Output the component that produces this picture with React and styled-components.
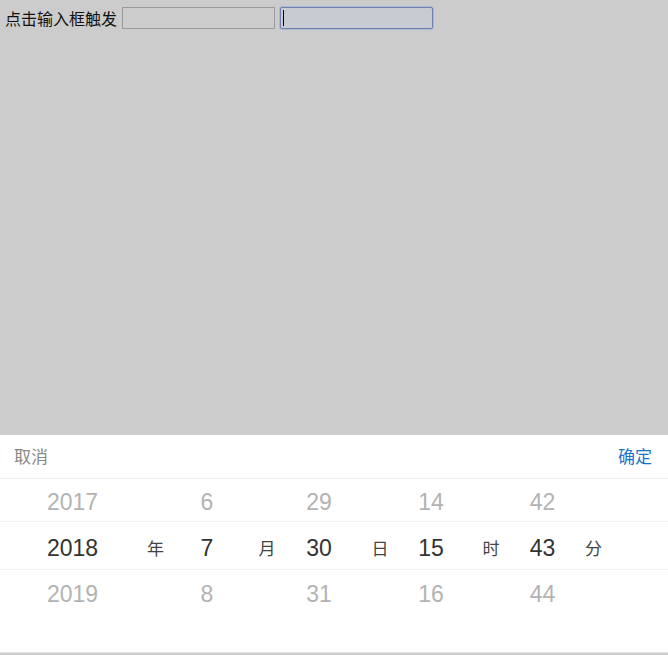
import React from "react";
import styled, { createGlobalStyle } from "styled-components";

const Global = createGlobalStyle`
  html, body { margin: 0; padding: 0; background: #cccccc; }
  body { font-family: "Noto Sans CJK SC", "Liberation Sans", sans-serif; }
  * { box-sizing: border-box; }
`;

const Page = styled.div`
  height: 655px;
  display: flex;
  flex-direction: column;
  justify-content: space-between;
  background: #cccccc;
`;

const TopBar = styled.div`
  display: flex;
  align-items: center;
  padding: 7px 5px 0;
  height: 29px;
`;

const Label = styled.span`
  font-size: 16px;
  line-height: 22px;
  color: #111;
  margin-right: 5px;
`;

const Field = styled.div`
  width: 153px;
  height: 22px;
  margin-right: 5px;
  border: 1px solid ${(p) => (p.$focused ? "#6f80b3" : "#9a9a9a")};
  border-radius: ${(p) => (p.$focused ? "2px" : "0")};
  background: ${(p) => (p.$focused ? "#c9cbd3" : "transparent")};
  box-shadow: ${(p) => (p.$focused ? "0 0 0 1px rgba(140,160,215,0.45)" : "none")};
  display: flex;
  align-items: center;
  padding-left: 2px;
`;

const Caret = styled.span`
  width: 1px;
  height: 16px;
  background: #000;
`;

const Panel = styled.div`
  height: 218px;
  margin-bottom: 2px;
  background: #fff;
  display: flex;
  flex-direction: column;
  border-bottom: 1px solid #e4e4e4;
`;

const Header = styled.div`
  height: 44px;
  flex: none;
  display: flex;
  justify-content: space-between;
  align-items: center;
  padding: 0 16px 2px 14px;
  border-bottom: 1px solid #f0f0f0;
`;

const HeaderButton = styled.span`
  font-size: 17px;
  color: ${(p) => (p.$primary ? "#1a73c9" : "#888")};
`;

const Wheels = styled.div`
  position: relative;
  flex: 1;
  display: grid;
  grid-template-columns: 145px 21px 82px 38px 66px 56px 46px 74px 29px 73px 1fr;
  align-items: start;
`;

const Indicator = styled.div`
  position: absolute;
  left: 0;
  right: 0;
  top: 42px;
  height: 49px;
  border-top: 1px solid #f2f2f2;
  border-bottom: 1px solid #f2f2f2;
  pointer-events: none;
`;

const Wheel = styled.div`
  display: flex;
  flex-direction: column;
  align-items: center;
`;

const Item = styled.div`
  height: 46px;
  line-height: 46px;
  font-family: "Liberation Sans", Arial, sans-serif;
  font-size: 23px;
  color: ${(p) => (p.$active ? "#333" : "#b3b3b3")};
  white-space: nowrap;
`;

const Unit = styled.div`
  margin-top: 46px;
  height: 46px;
  line-height: 46px;
  text-align: center;
  font-size: 17px;
  color: #444;
`;

const columns = [
  { values: ["2017", "2018", "2019"], unit: "年" },
  { values: ["6", "7", "8"], unit: "月" },
  { values: ["29", "30", "31"], unit: "日" },
  { values: ["14", "15", "16"], unit: "时" },
  { values: ["42", "43", "44"], unit: "分" },
];

export default function App() {
  return (
    <>
      <Global />
      <Page>
        <TopBar>
          <Label>点击输入框触发</Label>
          <Field />
          <Field $focused>
            <Caret />
          </Field>
        </TopBar>
        <Panel>
          <Header>
            <HeaderButton>取消</HeaderButton>
            <HeaderButton $primary>确定</HeaderButton>
          </Header>
          <Wheels>
            <Indicator />
            {columns.map((c) => (
              <React.Fragment key={c.unit}>
                <Wheel>
                  {c.values.map((v, i) => (
                    <Item key={v} $active={i === 1}>
                      {v}
                    </Item>
                  ))}
                </Wheel>
                <Unit>{c.unit}</Unit>
              </React.Fragment>
            ))}
          </Wheels>
        </Panel>
      </Page>
    </>
  );
}
